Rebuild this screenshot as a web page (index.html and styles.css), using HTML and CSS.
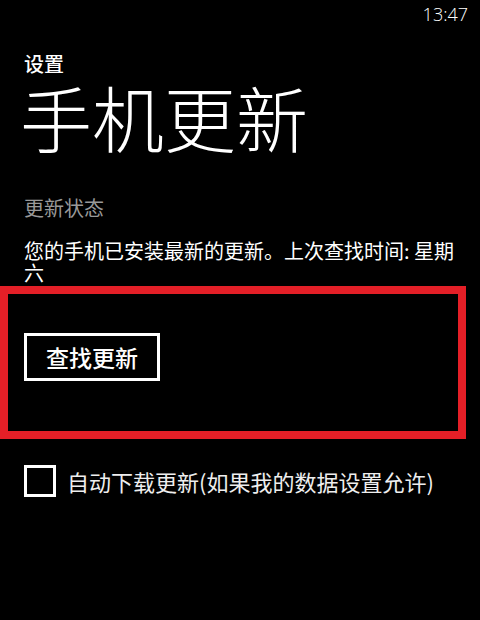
FILE: index.html
```html
<!DOCTYPE html>
<html lang="zh-CN">
<head>
<meta charset="UTF-8">
<meta name="viewport" content="width=device-width, initial-scale=1.0">
<title>手机更新</title>
<link rel="stylesheet" href="styles.css">
</head>
<body>
<div class="status-bar">13:47</div>
<div class="page">
  <div class="app-title">设置</div>
  <h1 class="page-title">手机更新</h1>
  <div class="section-label">更新状态</div>
  <p class="status-text">您的手机已安装最新的更新。上次查找时间: 星期六</p>
  <div class="highlight">
    <button class="check-btn">查找更新</button>
  </div>
  <label class="auto-row">
    <span class="checkbox"></span>
    <span class="auto-text">自动下载更新(如果我的数据设置允许)</span>
  </label>
</div>
</body>
</html>
```

FILE: styles.css
```css
html, body {
  margin:0;
  background:#000;
  color:#fff;
  font-family:'Noto Sans CJK SC', 'Noto Sans', sans-serif;
}
.status-bar {
  height:32px;
  line-height:29px;
  text-align:right;
  padding-right:12px;
  font-family:'Open Sans', 'Noto Sans', sans-serif;
  font-size:18px;
  font-weight:300;
}
.page {padding:0 24px;}
.app-title {margin-top:20px; font-size:20px; line-height:24px; font-weight:500;}
.page-title {margin:0 0 0 -4px; font-size:72px; line-height:80px; font-weight:300;}
.section-label {margin-top:40px; font-size:20px; line-height:24px; color:#999;}
.status-text {margin:20px 0 0; font-size:20px; line-height:22px; width:440px;}
.highlight {
  margin:2px -10px 0 -24px;
  border:8px solid #e41f27;
  padding:39px 16px 50px;
}
.check-btn {
  display:block;
  background:#000;
  color:#fff;
  border:3px solid #fff;
  font-family:inherit;
  font-size:23px;
  font-weight:500;
  height:48px;
  padding:0 19px;
  line-height:40px;
}
.auto-row {display:flex; align-items:center; gap:11px; margin-top:26px;}
.checkbox {width:26px; height:26px; border:3px solid #fff; flex:none;}
.auto-text {font-size:22px; line-height:32px; color:#eee; white-space:nowrap;}
```
